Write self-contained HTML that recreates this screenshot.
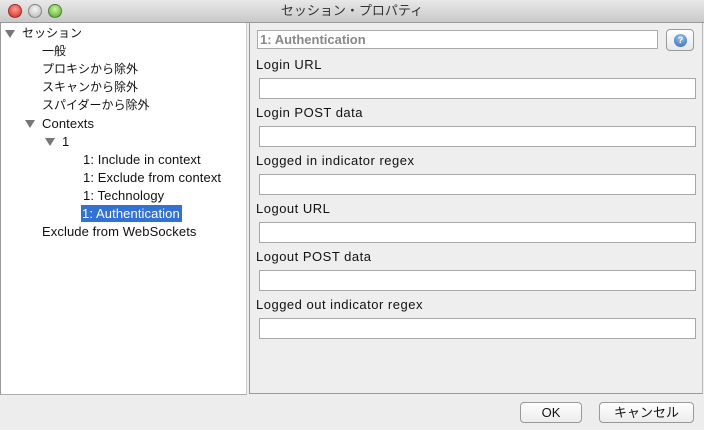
<!DOCTYPE html>
<html><head><meta charset="utf-8"><style>
*{margin:0;padding:0;box-sizing:border-box}
body{width:704px;height:430px;background:#ededed;font-family:"Liberation Sans","Noto Sans CJK JP",sans-serif;font-size:12px;color:#111;position:relative;overflow:hidden}
.title{position:absolute;left:0;top:0;width:704px;height:23px;background:linear-gradient(#e8e8e8,#c9c9c9);border-bottom:1px solid #999;text-align:center;line-height:22px;font-size:13px;color:#333}
.dot{position:absolute;top:4px;width:14px;height:14px;border-radius:50%;border:1px solid rgba(0,0,0,.35)}
.left{position:absolute;left:0;top:23px;width:247px;height:372px;background:#fff;border-left:1px solid #999;border-bottom:1px solid #aaa;border-right:1px solid #ccc}
.it{position:absolute;white-space:nowrap;height:17px;line-height:17px}
.en{font-size:13px;letter-spacing:0.1px}
.tri{position:absolute;width:0;height:0;border-left:5px solid transparent;border-right:5px solid transparent;border-top:8px solid #777}
.right{position:absolute;left:249px;top:23px;width:454px;height:371px;background:#eee;border-left:1px solid #999;border-bottom:1px solid #999;border-right:1px solid #bbb}
.lbl{position:absolute;left:256px;font-size:13px;letter-spacing:0.5px}
.fld{position:absolute;left:259px;width:437px;height:21px;background:#fff;border:1px solid #a8a8a8}
.btn{position:absolute;top:402px;height:21px;border:1px solid #999;border-radius:4px;background:linear-gradient(#fff,#ececec);text-align:center;line-height:19px;font-size:13px}
</style></head><body>
<div class="title">セッション・プロパティ
<div class="dot" style="left:8px;background:radial-gradient(circle at 50% 35%,#ff9a90,#d2271c)"></div>
<div class="dot" style="left:28px;background:radial-gradient(circle at 50% 35%,#f4f4f4,#b5b5b5)"></div>
<div class="dot" style="left:48px;background:radial-gradient(circle at 50% 35%,#c9f59a,#4fa72a)"></div>
</div>
<div class="left"></div>
<div class="tri" style="left:5px;top:30px"></div>
<div class="it" style="left:22px;top:25px">セッション</div>
<div class="it" style="left:42px;top:43px">一般</div>
<div class="it" style="left:42px;top:61px">プロキシから除外</div>
<div class="it" style="left:42px;top:79px">スキャンから除外</div>
<div class="it" style="left:42px;top:97px">スパイダーから除外</div>
<div class="tri" style="left:25px;top:120px"></div>
<div class="it en" style="left:42px;top:115px">Contexts</div>
<div class="tri" style="left:45px;top:138px"></div>
<div class="it en" style="left:62px;top:133px">1</div>
<div class="it en" style="left:83px;top:151px">1: Include in context</div>
<div class="it en" style="left:83px;top:169px">1: Exclude from context</div>
<div class="it en" style="left:83px;top:187px">1: Technology</div>
<div class="it en" style="left:81px;top:205px;background:#3272d4;color:#fff;padding:0 1px;width:101px;overflow:hidden">1: Authentication</div>
<div class="it en" style="left:42px;top:223px">Exclude from WebSockets</div>
<div class="right"></div>
<div style="position:absolute;left:257px;top:30px;width:401px;height:19px;background:#fff;border:1px solid #aaa;color:#888;font-size:13px;line-height:17px;padding-left:2px;font-weight:bold">1: Authentication</div>
<div style="position:absolute;left:666px;top:29px;width:28px;height:22px;border:1px solid #999;border-radius:4px;background:linear-gradient(#fff,#e8e8e8)">
<div style="position:absolute;left:7px;top:4px;width:13px;height:13px;border-radius:50%;background:radial-gradient(circle at 50% 30%,#9cc4f0,#2a66b8);color:#fff;font-size:9px;font-weight:bold;text-align:center;line-height:13px">?</div></div>
<div class="lbl" style="top:57px">Login URL</div><div class="fld" style="top:78px"></div>
<div class="lbl" style="top:105px">Login POST data</div><div class="fld" style="top:126px"></div>
<div class="lbl" style="top:153px">Logged in indicator regex</div><div class="fld" style="top:174px"></div>
<div class="lbl" style="top:201px">Logout URL</div><div class="fld" style="top:222px"></div>
<div class="lbl" style="top:249px">Logout POST data</div><div class="fld" style="top:270px"></div>
<div class="lbl" style="top:297px">Logged out indicator regex</div><div class="fld" style="top:318px"></div>
<div class="btn" style="left:520px;width:62px">OK</div>
<div class="btn" style="left:599px;width:95px">キャンセル</div>
</body></html>
